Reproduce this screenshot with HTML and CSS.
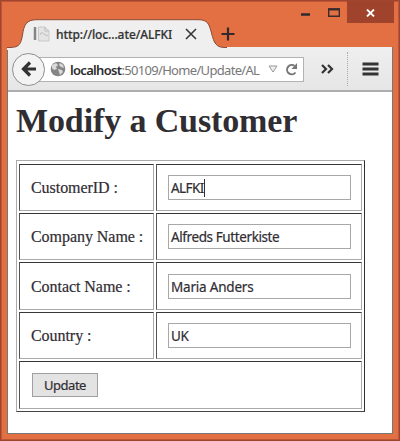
FILE: index.html
```html
<!DOCTYPE html>
<html lang="en">
<head>
<meta charset="utf-8">
<title>Modify a Customer</title>
<link rel="stylesheet" href="styles.css">
</head>
<body>
<div class="window">
  <header class="titlebar">
    <svg class="tab-shape" width="220" height="31" viewBox="0 0 220 31"><path d="M0 30 V28.5 H3 C13 28.5 14 24 15.500 16 C17 6 19 .7 30 .7 H191 C201 .7 202 5 204.500 14 C207 24 209 28.500 218 28.500 H220 V31 H0Z" fill="#efefef"/><path d="M0 28.500 H3 C13 28.500 14 24 15.500 16 C17 6 19 .7 30 .7 H191 C201 .7 202 5 204.500 14 C207 24 209 28.500 218 28.500 H220" fill="none" stroke="#8d4a35"/></svg>
    <div class="tab">
      <svg class="favicon" width="17" height="16" viewBox="0 0 17 16"><path d="M2 1v13" stroke="#858585" stroke-width="2.500"/><path d="M5.500 1H12l4 4v10H5.500z" fill="#e4e4e4" stroke="#c9c9c9"/><path d="M12 1v4h4M7 9q1-4 4-1t4 1" fill="none" stroke="#bbb"/></svg>
      <span class="tab-title">http://loc...ate/ALFKI</span>
      <svg class="tab-close" width="12" height="12" viewBox="0 0 12 12"><path d="M1 1l10 10M11 1l-10 10" stroke="#333" stroke-width="1.500"/></svg>
    </div>
    <svg class="new-tab" width="14" height="14" viewBox="0 0 14 14"><path d="M7 .5v13M.5 7h13" stroke="#33292b" stroke-width="2.200"/></svg>
    <div class="controls">
      <svg class="minimize" width="9" height="3"><path d="M0 1.500h9" stroke="#2f2a30" stroke-width="2.500"/></svg>
      <svg class="maximize" width="12" height="9"><path d="M.7 1.500h10.600v6.800H.7z" fill="none" stroke="#3a2b2d" stroke-width="1.400"/><path d="M0 1.200h12" stroke="#3a2b2d" stroke-width="2.200"/></svg>
      <div class="close"><svg width="9" height="8" viewBox="0 0 9 8"><path d="M1 .5l7 7M8 .5l-7 7" stroke="#fff" stroke-width="1.800"/></svg></div>
    </div>
  </header>
  <main class="client">
    <nav class="toolbar">
      <div class="back"><svg width="16" height="16" viewBox="0 0 16 16"><path d="M15 8H3M9 1.500L2.500 8 9 14.500" fill="none" stroke="#333" stroke-width="3.200"/></svg></div>
      <div class="address">
        <svg class="globe" width="16" height="16" viewBox="0 0 16 16"><circle cx="8" cy="8" r="7.300" fill="#858585"/><path d="M2 4l4-2 2 2-2 2 1 2-3 1-2-2zM10 2l3 2 1 3-3-1-2-2zM8 8l4 1 1 2-3 3-1-3z" fill="#d9d9d9"/></svg>
        <span class="url"><b>localhost</b>:50109/Home/Update/AL</span>
        <svg class="drop" width="10" height="8" viewBox="0 0 10 8"><path d="M1 1h8L5 7z" fill="#eee" stroke="#999"/></svg>
        <svg class="reload" width="13" height="13" viewBox="0 0 13 13"><path d="M9.500 2.800A4.700 4.700 0 1 0 10.500 9.500" fill="none" stroke="#777" stroke-width="2"/><path d="M12 0v6H6.500z" fill="#777"/></svg>
      </div>
      <svg class="more" width="13" height="10" viewBox="0 0 13 10"><path d="M1 1l4 4-4 4M7 1l4 4-4 4" fill="none" stroke="#333" stroke-width="2.200"/></svg>
      <div class="divider"></div>
      <svg class="menu" width="17" height="14" viewBox="0 0 17 14"><path d="M.5 2h16M.5 7h16M.5 12h16" stroke="#333" stroke-width="3"/></svg>
    </nav>
    <section class="page">
      <h1>Modify a Customer</h1>
      <form class="table">
        <div class="cell">CustomerID :</div><div class="cell value"><div class="input focus"><span class="caps">ALFKI</span></div></div>
        <div class="cell">Company Name :</div><div class="cell value"><div class="input"><span>Alfreds Futterkiste</span></div></div>
        <div class="cell">Contact Name :</div><div class="cell value"><div class="input"><span class="loose">Maria Anders</span></div></div>
        <div class="cell">Country :</div><div class="cell value"><div class="input"><span>UK</span></div></div>
        <div class="cell wide"><button type="button">Update</button></div>
      </form>
    </section>
  </main>
</div>
</body>
</html>
```
FILE: styles.css
```css
* { box-sizing: border-box; }
body { margin: 0; overflow: hidden; }
svg { display: block; flex: none; }
.window { width: 400px; height: 441px; background: #e27043; border: 1px solid #a2452e; box-shadow: inset 0 0 0 1px #bd5538; padding: 0 6px 7px; font-family: "Noto Sans", sans-serif; }
.titlebar { height: 46px; display: flex; position: relative; }
.tab-shape { position: absolute; left: 0; top: 18px; }
.tab { position: relative; width: 204px; height: 28px; margin-top: 19px; padding-left: 26px; display: flex; align-items: center; }
.tab-title { width: 129px; margin-left: 6px; font-size: 12px; font-weight: 500; color: #333; white-space: nowrap; letter-spacing: -.1px; -webkit-text-stroke: .2px #333; }
.new-tab { margin: 26px 0 0 10px; }
.controls { display: flex; margin: 0 -1px 0 auto; height: 22px; }
.minimize { margin: 12px 18px 0 0; }
.maximize { margin: 7px 7px 0 0; }
.close { width: 47px; height: 22px; padding-top: 2px; background: #9f432d; display: flex; align-items: center; justify-content: center; }
.client { border: 1px solid #777; border-top: 0; height: 387px; background: #fff; }
.toolbar { height: 45px; padding-top: 1px; background: linear-gradient(#efefef, #e6e6e6); border-bottom: 2px solid #adadaf; display: flex; align-items: center; }
.back { position: relative; z-index: 1; width: 33px; height: 33px; margin: 0 0 0 4px; border: 1px solid #8d8d8d; border-radius: 50%; background: #f3f3f3; display: flex; align-items: center; justify-content: center; }
.address { width: 271px; height: 25px; margin: 0 17px 0 -12px; border: 1px solid #b2b2b2; background: #fff; display: flex; align-items: center; padding-left: 16px; }
.url { width: 198px; margin-left: 4px; font-size: 13px; line-height: 20px; color: #777; white-space: nowrap; letter-spacing: -.68px; padding-top: 1px; }
.url b { color: #2d2d2d; font-weight: 600; }
.reload { margin-left: 7px; }
.divider { width: 1px; height: 34px; margin-left: 13px; border-left: 1px dotted #aaa; }
.menu { margin-left: 14px; }
.page { padding: 8px 0 0 8px; }
h1 { margin: 0; height: 60px; font: bold 34px/42px "Liberation Serif", serif; color: #302d33; white-space: nowrap; letter-spacing: -.12px; }
.table { width: 349px; height: 252px; display: grid; grid-template-columns: 135px 206px; grid-template-rows: 47px 47px 48px 47px 48px; gap: 2px; padding: 3px 2px 2px; border: 1px solid; border-color: #aaa #302d33 #444 #aaa; }
.cell { border: 1px solid; border-color: #39363b #aaa #aaa #555; padding: 1px 0 0 11px; display: flex; align-items: center; font: 16px "Liberation Serif", serif; color: #302d33; white-space: nowrap; letter-spacing: -.05px; -webkit-text-stroke: .2px #302d33; }
.value { padding-top: 0; }
.wide { grid-column: 1 / 3; padding: 0 0 0 12px; }
.input { width: 183px; height: 25px; border: 1px solid #a8a8aa; background: #fff; padding: 1px 0 0 2px; display: flex; align-items: center; font: 13.500px "Noto Sans", sans-serif; letter-spacing: -.4px; color: #302d33; }
.caps { letter-spacing: -.6px; }
.loose { letter-spacing: -.2px; }
.focus::after { content: ""; width: 1px; height: 18px; background: #302d33; }
button { width: 66px; height: 24px; margin: 0; padding: 0; border: 1px solid #a0a0a4; background: #e3e3e3; font: 13px/20px "Noto Sans", sans-serif; letter-spacing: -.5px; color: #302d33; -webkit-text-stroke: .2px #302d33; }
```
